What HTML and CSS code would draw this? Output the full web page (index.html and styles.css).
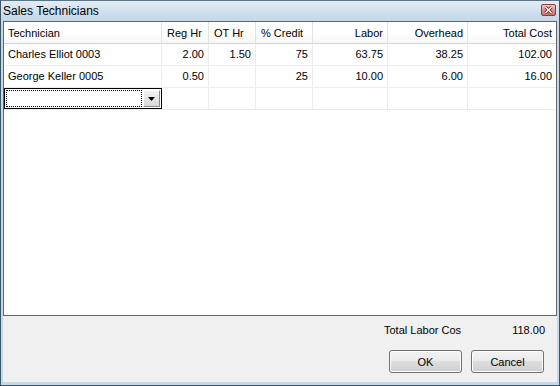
FILE: index.html
```html
<!DOCTYPE html>
<html lang="en">
<head>
    <meta charset="UTF-8">
    <title>Sales Technicians</title>
    <link rel="stylesheet" href="styles.css">
</head>
<body>
    <div class="window">
        <div class="titlebar">
            <span class="title">Sales Technicians</span>
            <div class="close">
                <svg width="9" height="8" viewBox="0 0 9 8">
                    <path d="M1.5 1 L7.5 7 M7.5 1 L1.5 7" stroke="#6b1f1f" stroke-width="3"/>
                    <path d="M1.5 1 L7.5 7 M7.5 1 L1.5 7" stroke="#fff" stroke-width="1.4"/>
                </svg>
            </div>
        </div>
        <div class="grid">
            <div class="row header">
                <div class="cell">Technician</div>
                <div class="cell">Reg Hr</div>
                <div class="cell">OT Hr</div>
                <div class="cell">% Credit</div>
                <div class="cell num">Labor</div>
                <div class="cell num">Overhead</div>
                <div class="cell num last">Total Cost</div>
            </div>
            <div class="row">
                <div class="cell">Charles Elliot 0003</div>
                <div class="cell num">2.00</div>
                <div class="cell num">1.50</div>
                <div class="cell num">75</div>
                <div class="cell num">63.75</div>
                <div class="cell num">38.25</div>
                <div class="cell num last">102.00</div>
            </div>
            <div class="row">
                <div class="cell">George Keller 0005</div>
                <div class="cell num">0.50</div>
                <div class="cell num"></div>
                <div class="cell num">25</div>
                <div class="cell num">10.00</div>
                <div class="cell num">6.00</div>
                <div class="cell num last">16.00</div>
            </div>
            <div class="row">
                <div class="cell combo-cell">
                    <div class="combo">
                        <div class="combo-text"></div>
                        <div class="combo-btn">
                            <svg width="7" height="4" viewBox="0 0 7 4"><path d="M0 0 H7 L3.5 4 Z" fill="#000"/></svg>
                        </div>
                    </div>
                </div>
                <div class="cell"></div>
                <div class="cell"></div>
                <div class="cell"></div>
                <div class="cell"></div>
                <div class="cell"></div>
                <div class="cell last"></div>
            </div>
        </div>
        <div class="footer">
            <div class="totals">
                <span class="total-label">Total Labor Cos</span>
                <span class="total-value">118.00</span>
            </div>
            <div class="buttons">
                <button type="button">OK</button>
                <button type="button">Cancel</button>
            </div>
        </div>
    </div>
</body>
</html>
```

FILE: styles.css
```css
body {
    margin: 0;
    font-family: "Liberation Sans", Arial, sans-serif;
    font-size: 11px;
    color: #000;
    background: #f0f0f0;
}

.window {
    width: 560px;
    height: 386px;
    box-sizing: border-box;
    display: flex;
    flex-direction: column;
    border: 1px solid #3b5565;
    border-top-color: #58758a;
    background: #c4d8e8;
    padding: 0 2px 3px 2px;
}

.titlebar {
    height: 20px;
    display: flex;
    align-items: center;
    background: linear-gradient(to bottom, #e3ecf5, #c2d6e8);
    margin: 0 -2px;
    padding: 0 3px 0 2px;
}

.title {
    font-size: 12px;
    margin-top: -1px;
}

.close {
    margin-left: auto;
    margin-top: -3px;
    width: 15px;
    height: 12px;
    box-sizing: border-box;
    border: 1px solid #8c3c3c;
    border-radius: 2px;
    background: linear-gradient(to bottom, #efc8c4, #d6918b 55%, #c9716b);
    display: flex;
    align-items: center;
    justify-content: center;
}

.grid {
    height: 295px;
    box-sizing: border-box;
    background: #fff;
    border: 1px solid #646464;
    margin-top: 0;
}

.row {
    display: grid;
    grid-template-columns: 158px 47px 47px 57px 75px 80px 1fr;
    height: 22px;
}

.row.header {
    height: 22px;
    background: linear-gradient(to bottom, #ffffff, #ffffff 50%, #f4f5f7);
}

.cell {
    box-sizing: border-box;
    border-right: 1px solid #ececec;
    border-bottom: 1px solid #ececec;
    padding: 0 4px 0 4px;
    line-height: 21px;
    white-space: nowrap;
    overflow: hidden;
}

.header .cell {
    border-right-color: #e4e4e4;
    border-bottom-color: #d5d5d5;
    padding-left: 5px;
    line-height: 22px;
}

.header .cell:first-child {
    padding-left: 4px;
}

.cell.num {
    text-align: right;
}

.cell.last {
    border-right: none;
}

.combo-cell {
    padding: 0;
    border-right: none;
    overflow: visible;
}

.combo {
    height: 21px;
    width: 158px;
    box-sizing: border-box;
    border: 1px solid #000;
    display: flex;
    background: #fff;
}

.combo-text {
    flex: 1;
    margin: 1px;
    border: 1px dotted #000;
}

.combo-btn {
    width: 17px;
    box-sizing: border-box;
    margin: 1px 1px 1px 0;
    border: 1px solid #8a8a8a;
    border-top-color: #ffffff;
    border-left-color: #ffffff;
    background: linear-gradient(to bottom, #f2f2f2, #d8d8d8);
    display: flex;
    align-items: center;
    justify-content: center;
}

.footer {
    flex: 1;
    background: #f0f0f0;
    margin-left: 0;
    display: flex;
    flex-direction: column;
    align-items: flex-end;
    padding-right: 12px;
}

.totals {
    display: flex;
    margin-top: 7px;
    height: 14px;
    line-height: 14px;
}

.total-label {
    width: 121px;
}

.total-value {
    width: 40px;
    text-align: right;
}

.buttons {
    display: flex;
    gap: 9px;
    margin-top: 13px;
    padding-right: 1px;
}

button {
    width: 73px;
    height: 23px;
    font-family: "Liberation Sans", Arial, sans-serif;
    font-size: 11px;
    color: #000;
    border: 1px solid #707070;
    border-radius: 3px;
    background: linear-gradient(to bottom, #f2f2f2, #ebebeb 50%, #dddddd 50%, #cfcfcf);
    box-shadow: inset 0 0 0 1px #fcfcfc;
    padding: 0;
}
```
